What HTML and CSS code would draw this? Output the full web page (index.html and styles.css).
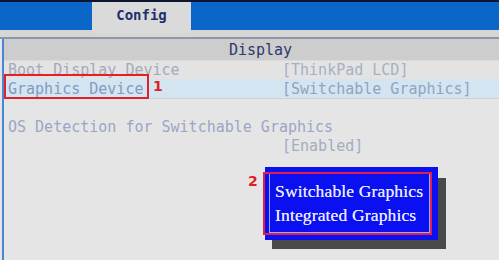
FILE: index.html
```html
<!DOCTYPE html>
<html>
<head>
<meta charset="utf-8">
<link rel="stylesheet" href="styles.css">
</head>
<body>
<div class="screen">
  <div class="topbar">
    <div class="tab">Config</div>
  </div>
  <div class="strip"></div>
  <div class="panel">
    <div class="head">Display</div>
    <div class="row dim"><span class="label">Boot Display Device</span><span class="value">[ThinkPad LCD]</span></div>
    <div class="row sel"><span class="label">Graphics Device</span><span class="value">[Switchable Graphics]</span></div>
    <div class="row gap"></div>
    <div class="row lbl2"><span class="label wide">OS Detection for Switchable Graphics</span></div>
    <div class="row lbl2"><span class="label"></span><span class="value">[Enabled]</span></div>
  </div>

  <div class="mark mark1"></div>
  <div class="num num1">1</div>

  <div class="popup">
    <div class="shadow"></div>
    <div class="box">
      <div class="opt">Switchable Graphics</div>
      <div class="opt">Integrated Graphics</div>
    </div>
  </div>
  <div class="mark mark2"></div>
  <div class="num num2">2</div>
</div>
</body>
</html>
```

FILE: styles.css
```css
html, body {
  margin: 0;
  padding: 0;
  background: #e5e5e5;
}
.screen {
  position: relative;
  width: 499px;
  height: 260px;
  overflow: hidden;
  background: #e5e5e5;
  font-family: "DejaVu Sans Mono", monospace;
}
.topbar {
  height: 30px;
  border-top: 2px solid #0b1530;
  box-sizing: border-box;
  background: #0a66c9;
  display: flex;
  padding-left: 92px;
}
.tab {
  width: 99px;
  height: 31px;
  background: #dadada;
  color: #1e2f6e;
  font-weight: bold;
  font-size: 14px;
  line-height: 27px;
  text-align: center;
}
.strip {
  height: 7px;
  background: #d6d6d6;
  border-bottom: 2px solid #8c98a8;
}
.panel {
  margin-left: 2px;
  border-left: 2px solid #4a86d8;
  height: 240px;
  font-size: 15px;
}
.head {
  height: 21px;
  background: #cdcdcd;
  color: #2a3a70;
  text-align: center;
  line-height: 22px;
  padding-left: 18px;
  border-bottom: 1px solid #dadada;
}
.row {
  display: flex;
  height: 18px;
  line-height: 18px;
  padding-left: 4px;
  white-space: nowrap;
}
.row .label {
  width: 274px;
  flex: none;
}
.row .label.wide {
  width: auto;
}
.row.dim {
  color: #a3aabb;
  background: #e3e3e3;
}
.row.sel {
  color: #7f9cc2;
  background: #d4e4f0;
  height: 19px;
  line-height: 20px;
  border-bottom: 1px solid #c9d3dc;
}
.row.gap {
  height: 19px;
}
.row.lbl2 {
  color: #9ba6c6;
  margin-bottom: 1px;
}
.row.dim .value { color: #a6b0c4; }
.row.sel .value { color: #8ea4c4; }
.row.lbl2 .value { color: #a3acc2; }

.mark {
  position: absolute;
  border: 2px solid #e0202a;
  box-sizing: border-box;
}
.mark1 {
  left: 4px;
  top: 74px;
  width: 145px;
  height: 25px;
}
.num {
  position: absolute;
  color: #e02020;
  font-family: "DejaVu Sans", sans-serif;
  font-weight: bold;
  font-size: 14px;
  line-height: 14px;
}
.num1 { left: 153px; top: 79px; }
.num2 { left: 248px; top: 174px; }

.popup {
  position: absolute;
  left: 265px;
  top: 167px;
  width: 173px;
  height: 73px;
}
.shadow {
  position: absolute;
  left: 7px;
  top: 11px;
  width: 174px;
  height: 71px;
  background: #4a4a4a;
}
.box {
  position: absolute;
  inset: 0;
  background: #0a10f0;
  box-sizing: border-box;
  padding: 12px 0 0 10px;
}
.box::before {
  content: "";
  position: absolute;
  left: 4px;
  top: 5px;
  right: 8px;
  bottom: 7px;
  border: 1px solid #9aa8ff;
}
.opt {
  position: relative;
  color: #e6e8ff;
  font-family: "Liberation Serif", serif;
  font-size: 17.5px;
  line-height: 24px;
  letter-spacing: 0.15px;
  text-shadow: 0 0 0.6px #e6e8ff;
}
.mark2 {
  left: 263px;
  top: 172px;
  width: 169px;
  height: 63px;
  border-color: #e0204a;
}
```
